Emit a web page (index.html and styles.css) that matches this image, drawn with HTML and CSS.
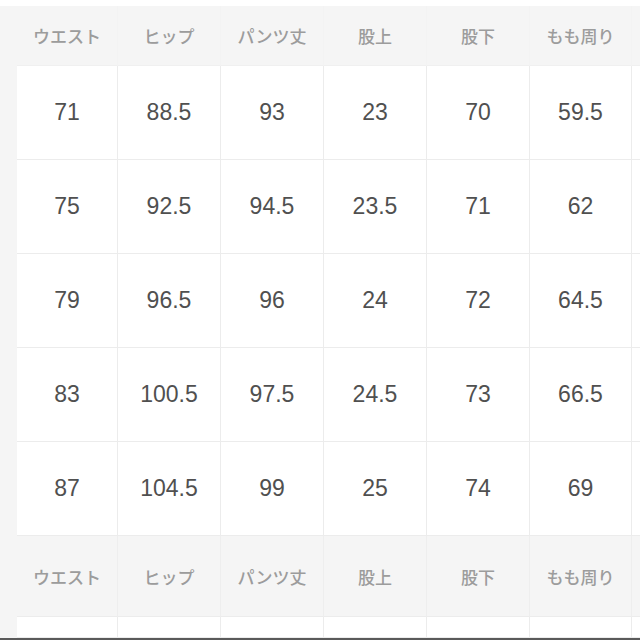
FILE: index.html
```html
<!DOCTYPE html>
<html lang="ja">
<head>
<meta charset="utf-8">
<link rel="stylesheet" href="styles.css">
</head>
<body>
<div class="top-strip"></div>
<div class="sheet">
  <div class="grid">
    <div class="hd">ウエスト</div><div class="hd">ヒップ</div><div class="hd">パンツ丈</div><div class="hd">股上</div><div class="hd">股下</div><div class="hd">もも周り</div><div class="hd"></div>

    <div class="cell">71</div><div class="cell">88.5</div><div class="cell">93</div><div class="cell">23</div><div class="cell">70</div><div class="cell">59.5</div><div class="cell"></div>
    <div class="cell">75</div><div class="cell">92.5</div><div class="cell">94.5</div><div class="cell">23.5</div><div class="cell">71</div><div class="cell">62</div><div class="cell"></div>
    <div class="cell">79</div><div class="cell">96.5</div><div class="cell">96</div><div class="cell">24</div><div class="cell">72</div><div class="cell">64.5</div><div class="cell"></div>
    <div class="cell">83</div><div class="cell">100.5</div><div class="cell">97.5</div><div class="cell">24.5</div><div class="cell">73</div><div class="cell">66.5</div><div class="cell"></div>
    <div class="cell">87</div><div class="cell">104.5</div><div class="cell">99</div><div class="cell">25</div><div class="cell">74</div><div class="cell">69</div><div class="cell"></div>

    <div class="hd hd-low">ウエスト</div><div class="hd hd-low">ヒップ</div><div class="hd hd-low">パンツ丈</div><div class="hd hd-low">股上</div><div class="hd hd-low">股下</div><div class="hd hd-low">もも周り</div><div class="hd hd-low"></div>

    <div class="cell"></div><div class="cell"></div><div class="cell"></div><div class="cell"></div><div class="cell"></div><div class="cell"></div><div class="cell"></div>
  </div>
</div>
<div class="bottom-bar"></div>
</body>
</html>
```

FILE: styles.css
```css
html, body {
  margin: 0;
  padding: 0;
  width: 640px;
  height: 640px;
  overflow: hidden;
  background: #f6f6f6;
}

.top-strip {
  height: 6px;
  background: #ffffff;
}

.sheet {
  padding-left: 17px;
  background: #f5f5f5;
  overflow: hidden;
}

.grid {
  display: grid;
  grid-template-columns: 101px 103px 103px 103px 103px 102px 20px;
  grid-template-rows: 60px repeat(5, 94px) 81px 21px;
  width: 640px;
}

.hd, .cell {
  box-sizing: border-box;
  display: flex;
  align-items: center;
  justify-content: center;
}

.hd {
  background: #f5f5f5;
  border-right: 1px solid #f3f3f3;
  border-bottom: 1px solid #f0f0f0;
  font-family: "Noto Sans CJK JP", "Noto Sans", sans-serif;
  font-size: 17px;
  font-weight: 500;
  color: #9c9c9c;
}

.hd-low {
  border-right-color: #eeeeee;
  border-bottom-color: #ececec;
}

.cell {
  background: #ffffff;
  border-right: 1px solid #ececec;
  border-bottom: 1px solid #ececec;
  font-family: "Liberation Sans", Arial, sans-serif;
  font-size: 23px;
  color: #505050;
}

.bottom-bar {
  height: 2px;
  background: #5a5a5a;
}
```
